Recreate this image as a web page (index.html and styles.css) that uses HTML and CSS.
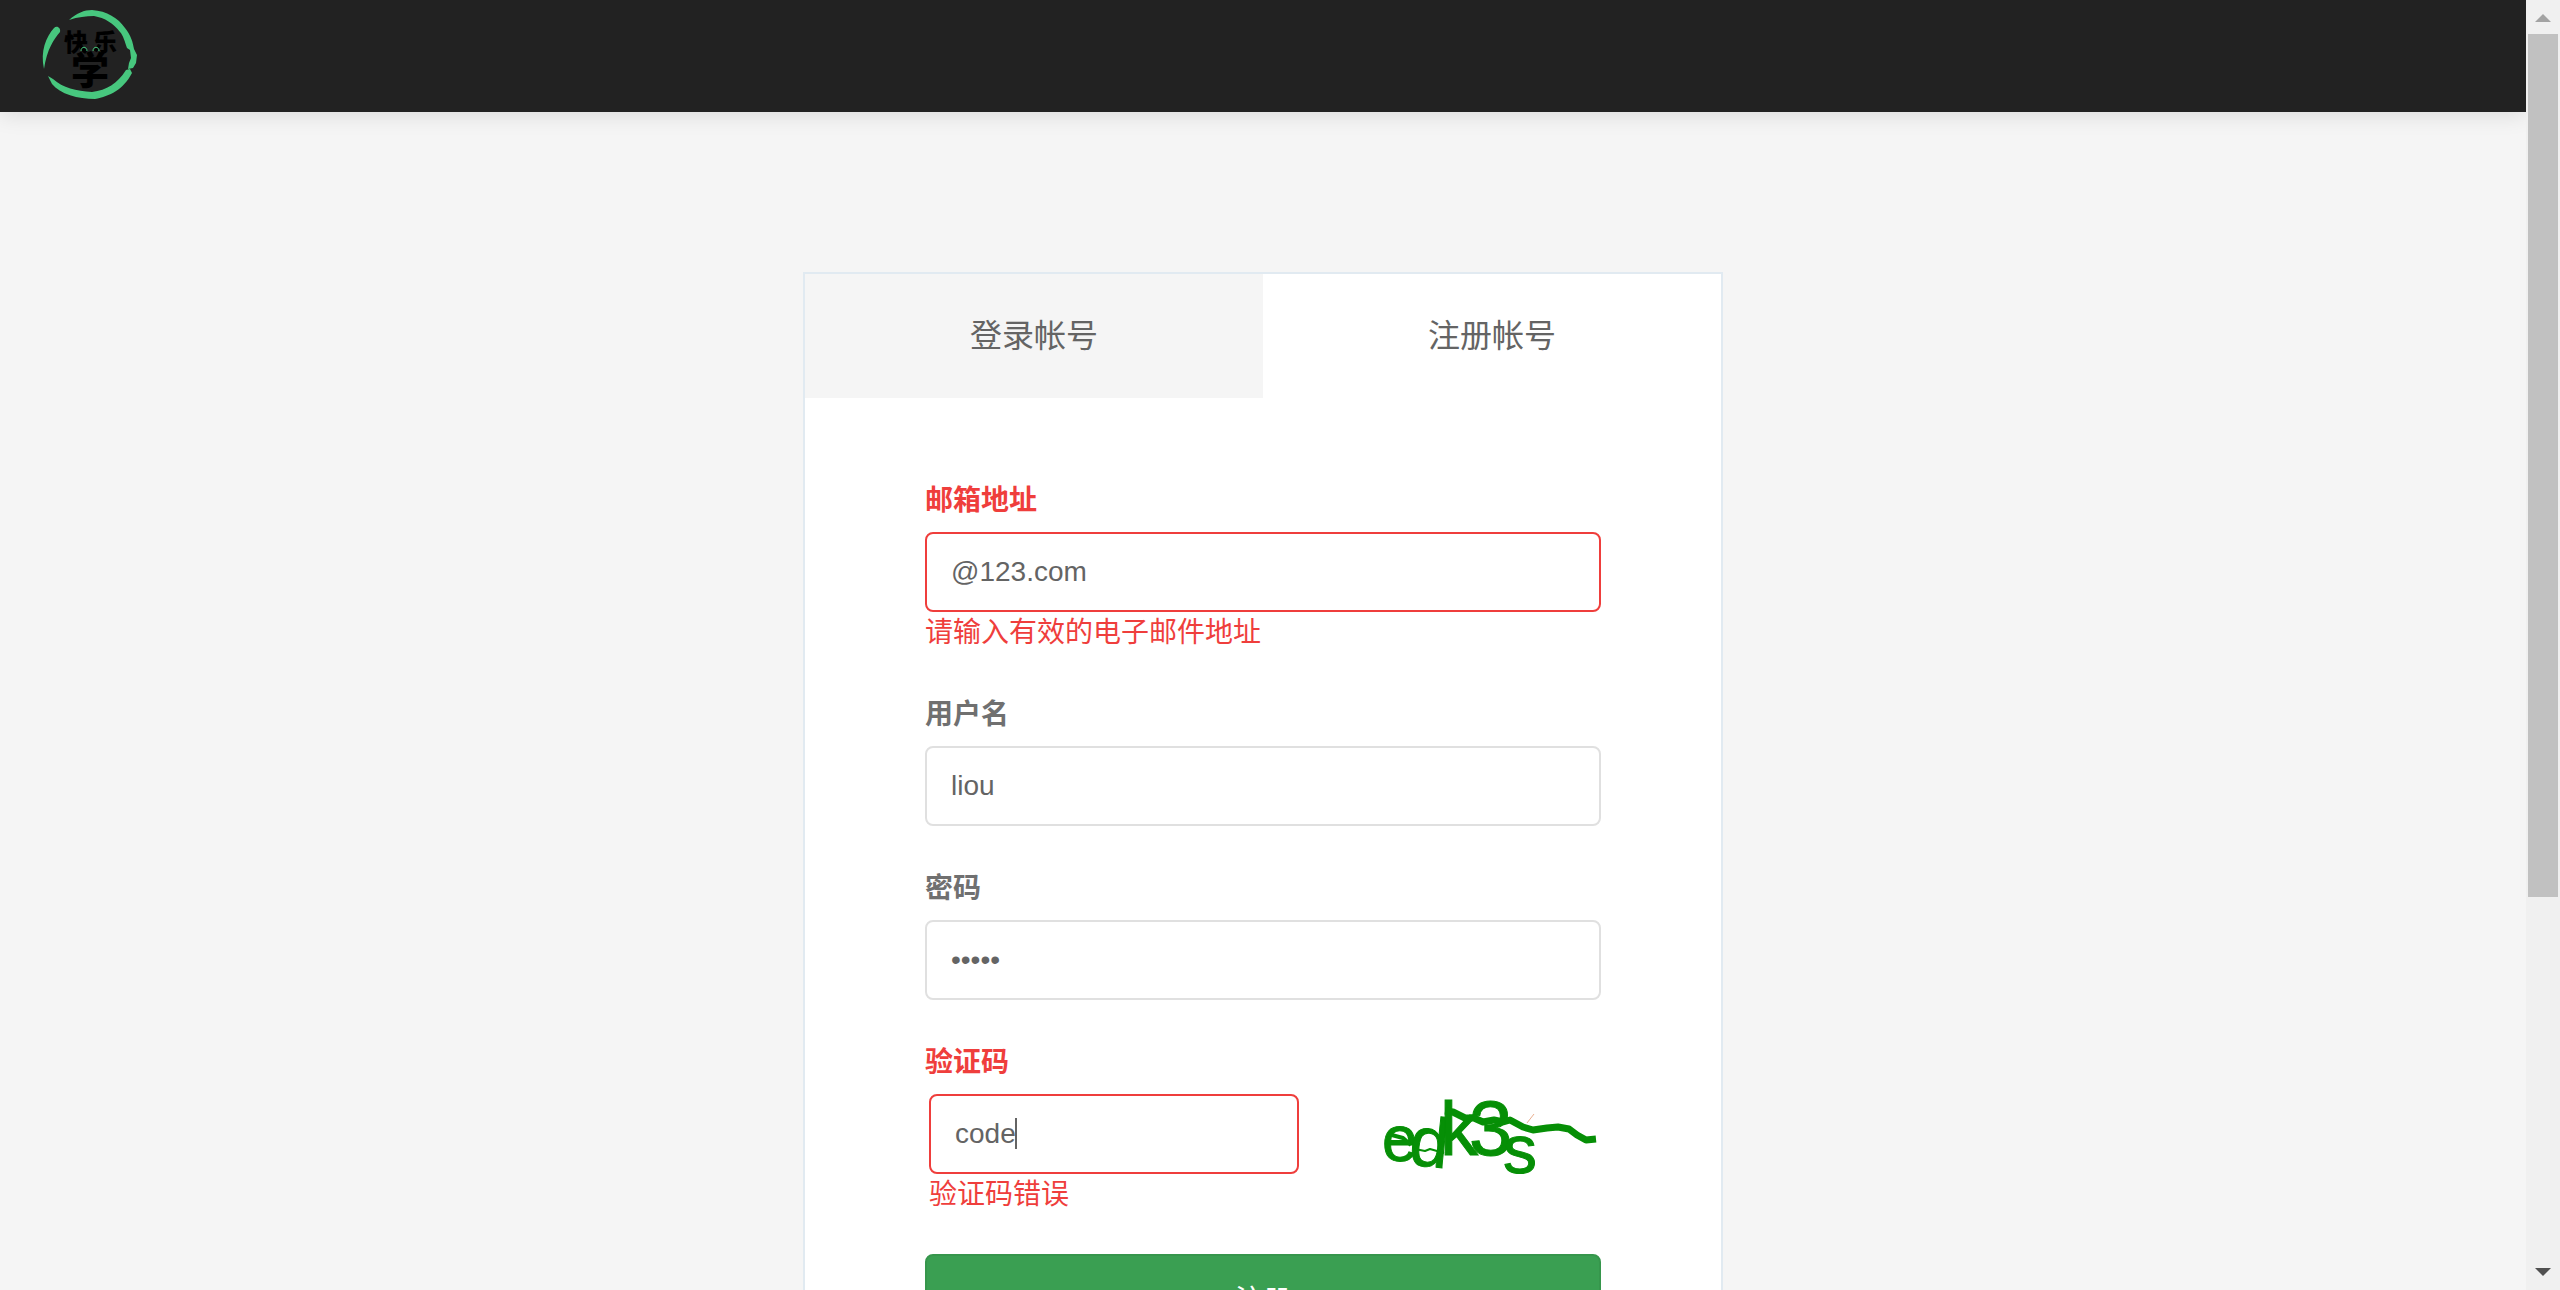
FILE: index.html
```html
<!DOCTYPE html>
<html lang="zh-CN">
<head>
<meta charset="utf-8">
<title>注册帐号</title>
<link rel="stylesheet" href="styles.css">
</head>
<body>
<div class="page">
  <header class="navbar">
    <a class="logo" href="#" aria-label="快乐学">
      <svg width="96" height="96" viewBox="0 0 96 96">
        <g fill="#47c77e">
          <path d="M29 12C37 5 44 2 52 2C67 3 78 10 85 20C91 27 93 35 94 41L97 47L96 55L93 60L88 61L89 55L91 50L90 42L87 40C85 34 83 27 80 24C73 15 65 10 54 8C46 8 38 9 29 12Z"/>
          <path d="M14 20C17 17 21 20 20 24C14 31 7 41 4 61C0 43 6 29 14 20Z"/>
          <path d="M8 68L13 71C23 80 36 83 52 84C67 82 77 76 86 62L90 61L92 65C83 82 70 88 55 91C38 91 20 86 12 76Z"/>
        </g>
        <text class="logo-top" x="36" y="43" text-anchor="middle">快</text>
        <text class="logo-top" x="65" y="43" text-anchor="middle">乐</text>
        <text class="logo-main" x="50" y="76" text-anchor="middle">学</text>
        <path d="M41 43C41 38 47 38 47 43M53 43C53 38 59 38 59 43" fill="none" stroke="#47c77e"/>
      </svg>
    </a>
  </header>
  <main class="content">
    <section class="card">
      <nav class="tabs">
        <a class="tab" href="#">登录帐号</a>
        <a class="tab tab-active" href="#" aria-current="page">注册帐号</a>
      </nav>
      <form class="form">
        <div class="field invalid">
          <label for="email">邮箱地址</label>
          <input id="email" type="text" value="@123.com">
          <p class="error">请输入有效的电子邮件地址</p>
        </div>
        <div class="field">
          <label for="username">用户名</label>
          <input id="username" type="text" value="liou">
        </div>
        <div class="field">
          <label for="password">密码</label>
          <input id="password" type="password" value="abcde">
        </div>
        <div class="field invalid">
          <label for="code">验证码</label>
          <div class="captcha-row">
            <div class="captcha-input">
              <input id="code" type="text" value="code">
              <span class="caret"></span>
              <p class="error">验证码错误</p>
            </div>
            <svg class="captcha" width="224" height="80" viewBox="0 0 224 80" role="img" aria-label="验证码图片">
              <text x="9" y="67" font-size="64">e</text>
              <text x="37" y="72" font-size="70" transform="rotate(6 52 50)">d</text>
              <text x="67" y="61" font-size="76">k</text>
              <text x="96" y="61" font-size="78">3</text>
              <text x="130" y="79" font-size="68">s</text>
              <g fill="none" stroke="#068f06" stroke-linejoin="round">
                <path d="M72 17L80 18L92 24L101 24L110 28L121 26L130 28L137 26L150 33L160 36L174 34L185 33L196 35L204 41L213 46L223 45" stroke-width="7"/>
                <path d="M15 40L30 44L38 51" stroke-width="4"/>
                <path d="M42 55L52 57L57 55L71 59" stroke-width="2"/>
                <path d="M154 29L161 20" stroke="#eab090"/>
              </g>
            </svg>
          </div>
        </div>
        <button class="submit" type="submit">注册</button>
      </form>
    </section>
  </main>
</div>
<div class="scrollbar" aria-hidden="true">
  <svg class="arrow" width="34" height="34" viewBox="0 0 34 34"><path d="M9 22L17 14L25 22Z" fill="#a3a3a3"/></svg>
  <div class="thumb"></div>
  <div class="track"></div>
  <svg class="arrow" width="34" height="34" viewBox="0 0 34 34"><path d="M9 12L17 20L25 12Z" fill="#505050"/></svg>
</div>
</body>
</html>
```
FILE: styles.css
```css
* { box-sizing: border-box; }

body {
  margin: 0;
  height: 100vh;
  display: flex;
  overflow: hidden;
  background: #f5f5f5;
  color: #646464;
  font-family: "Liberation Sans", "Noto Sans CJK SC", sans-serif;
  font-size: 28px;
}

.page { flex: 1; min-width: 0; overflow: hidden; }

.navbar {
  height: 112px;
  padding: 8px 40px;
  background: #222;
  box-shadow: 0 4px 20px rgba(0, 0, 0, 0.1);
}

.logo { display: inline-block; }
.logo svg { display: block; overflow: visible; }
.logo text { font-family: "Noto Sans CJK SC", sans-serif; font-weight: 900; fill: #000; }
.logo-top { font-size: 24px; }
.logo-main { font-size: 38px; }

.content { padding: 160px 40px 80px; }

.card {
  max-width: 920px;
  margin: 0 auto;
  border: 2px solid #e1eaf1;
  background: #fff;
}

.tabs { display: flex; }

.tab {
  flex: 1;
  padding: 38px 0;
  background: #f5f5f5;
  color: #646464;
  font-size: 32px;
  line-height: 48px;
  text-align: center;
  text-decoration: none;
}

.tab-active { background: #fff; }

.form { padding: 80px 120px; }

.field { margin-bottom: 40px; }
.field.invalid { margin-bottom: 38px; }

label {
  display: block;
  margin-bottom: 8px;
  color: #707070;
  font-weight: bold;
  line-height: 46px;
}

input {
  display: block;
  width: 100%;
  height: 80px;
  padding: 0 24px;
  border: 2px solid #e0e0e0;
  border-radius: 8px;
  outline: none;
  background: #fff;
  color: #646464;
  font: inherit;
}

.invalid label, .error { color: #ef3e3c; }
.invalid input { border-color: #ef3e3c; }
.error { margin: 0; line-height: 42px; }

.captcha-row {
  display: flex;
  justify-content: space-between;
  padding: 0 4px;
}

.captcha-input { position: relative; width: 370px; }

.caret {
  position: absolute;
  top: 24px;
  left: 86px;
  width: 2px;
  height: 31px;
  background: #646464;
}

.captcha { display: block; }

.captcha text {
  font-family: "Liberation Sans Narrow", "Liberation Sans", sans-serif;
  fill: #068f06;
  stroke: #068f06;
}

.submit {
  display: block;
  width: 100%;
  height: 88px;
  padding: 0;
  border: 2px solid #36964c;
  border-radius: 8px;
  background: #3a9f52;
  color: #fff;
  font: inherit;
}

.scrollbar {
  display: flex;
  flex-direction: column;
  width: 34px;
  background: #f0f0f0;
}

.arrow { display: block; flex: none; }
.thumb { flex: 12; margin: 0 2px; background: #c1c1c1; }
.track { flex: 5; }
```
